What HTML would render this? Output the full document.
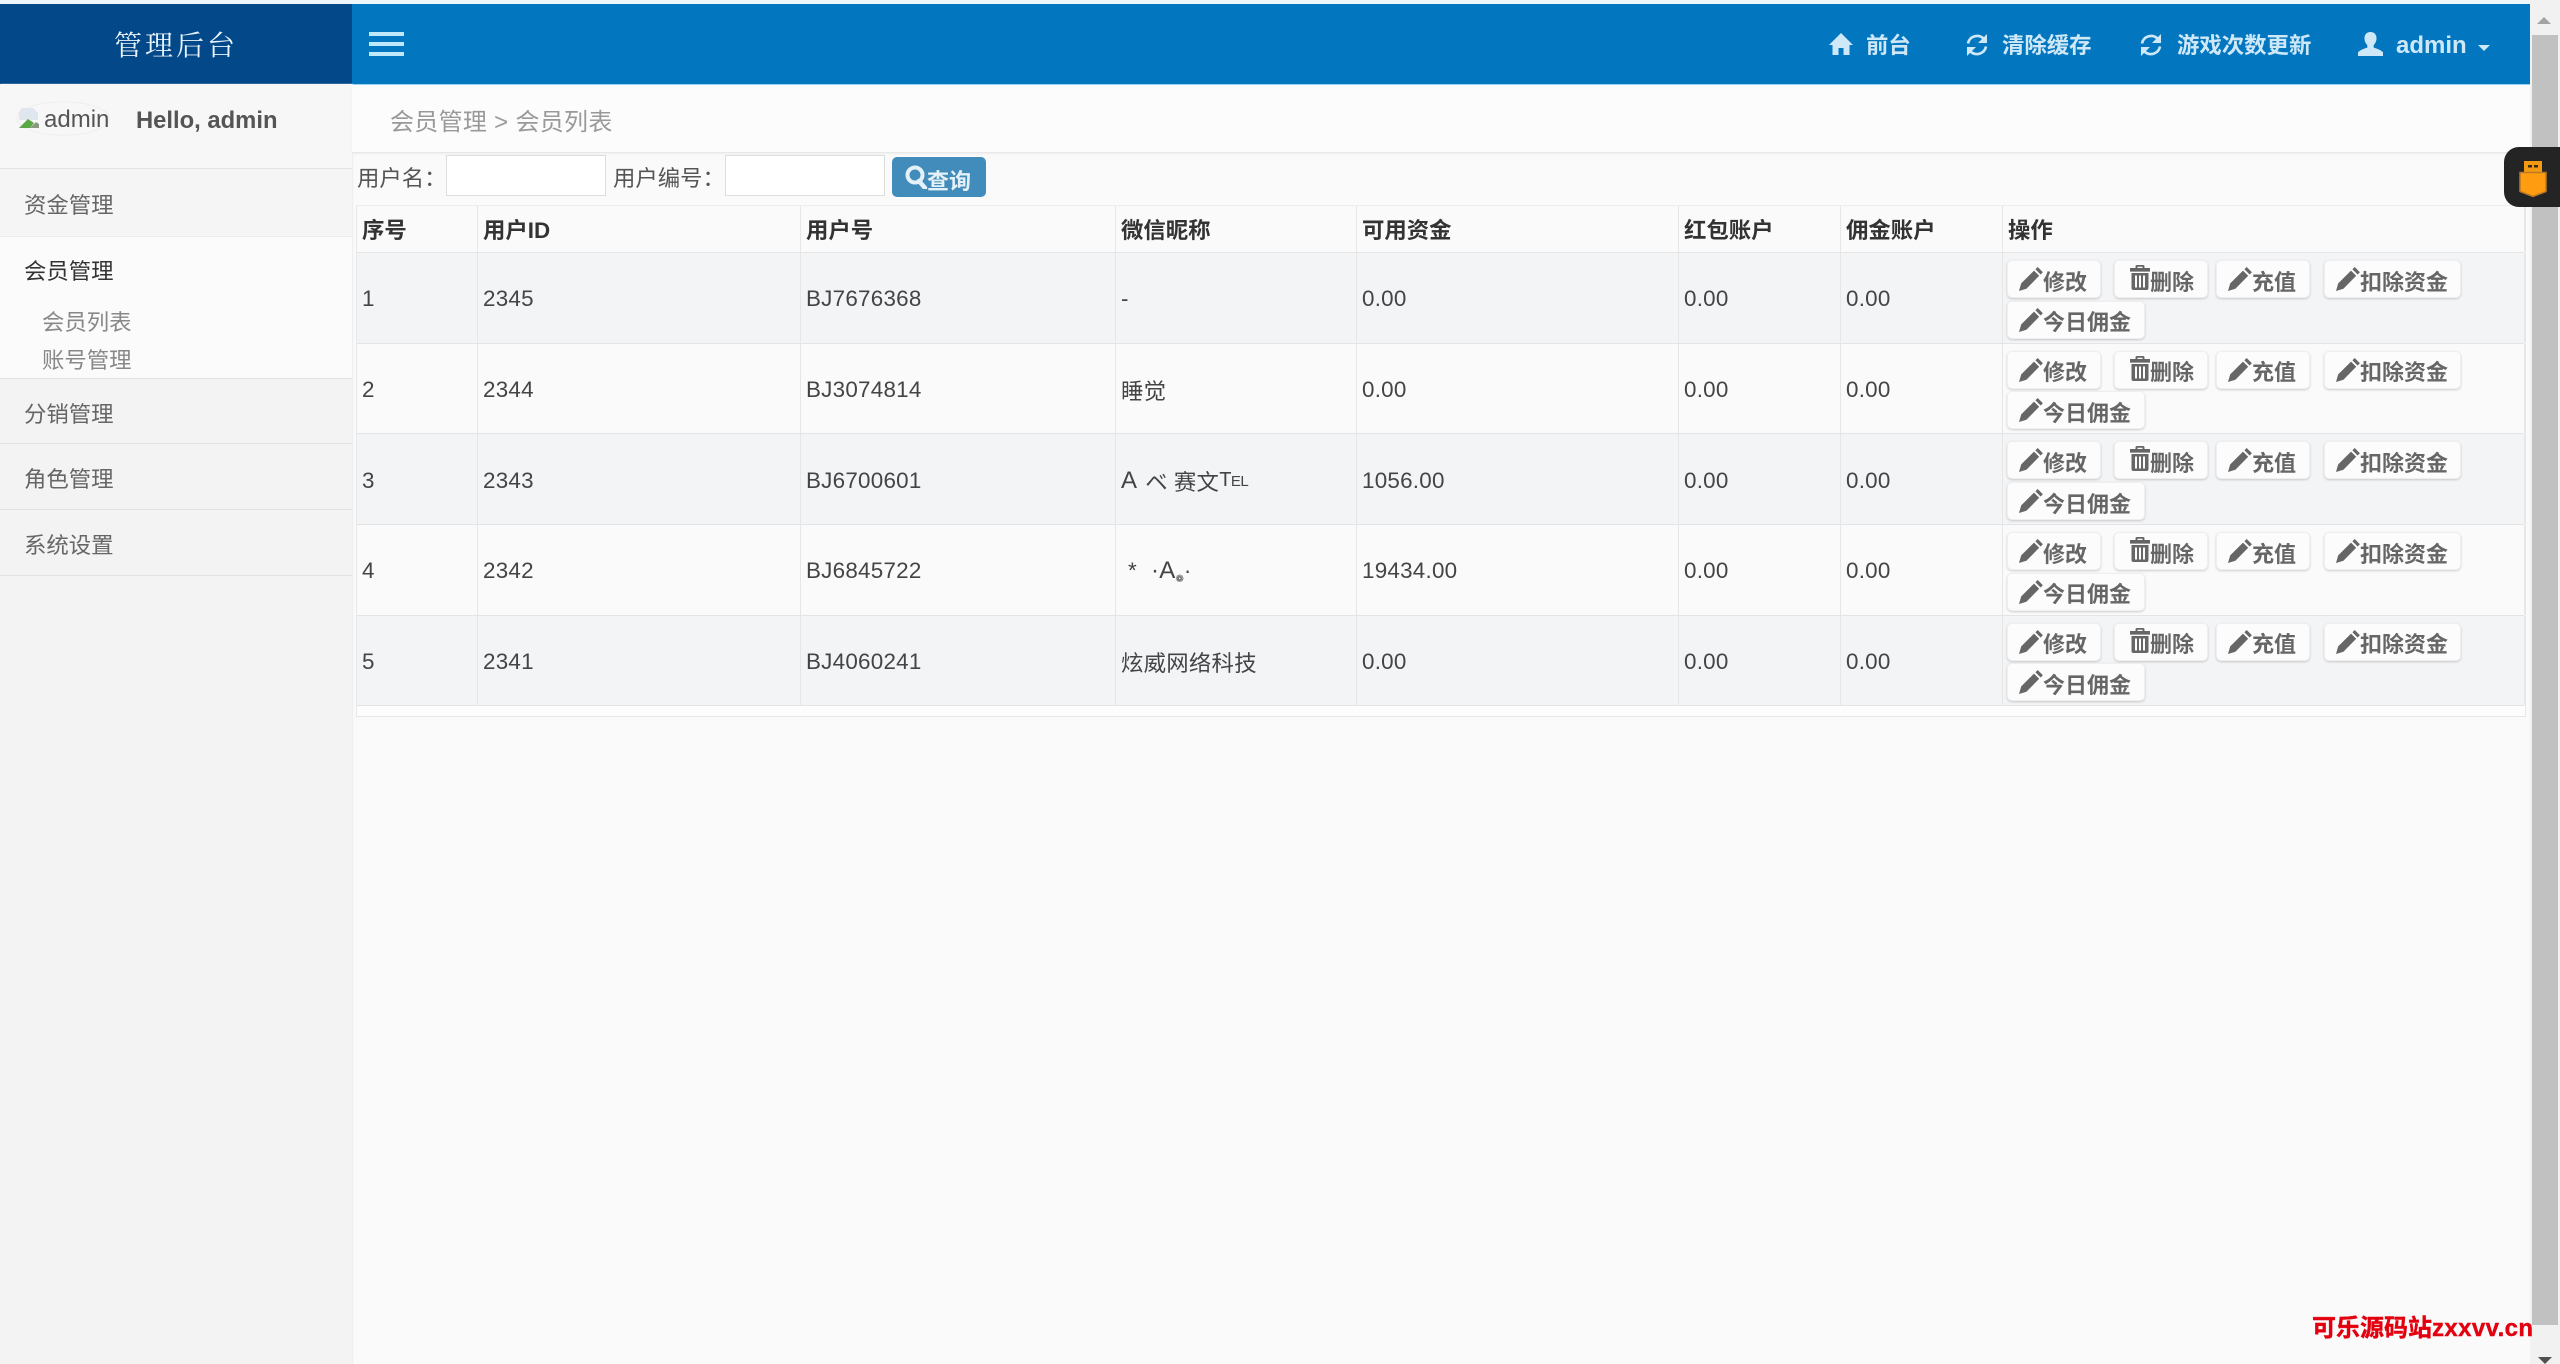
<!DOCTYPE html>
<html lang="zh-CN">
<head>
<meta charset="utf-8">
<title>管理后台</title>
<style>
html,body{margin:0;padding:0;width:2560px;height:1364px;overflow:hidden;background:#fafafa}
body{font-family:"Liberation Sans","Noto Sans CJK SC",sans-serif;font-size:22.4px;color:#444}
#wrap{position:absolute;left:0;top:0;width:2560px;height:1364px;overflow:hidden;filter:blur(.35px);background:#fafafa}
.a{position:absolute}
.t{position:absolute;line-height:40px;height:40px;white-space:nowrap}
.side{left:0;top:84px;width:352px;height:1280px;background:#f3f3f3;box-shadow:1px 0 1px #ececec}
.line{position:absolute;left:0;width:352px;height:1px;background:#e2e2e2}
.menu{left:24px;color:#666}
.sub{left:42px;color:#888}
.top{color:#cfe8f8;font-weight:bold;font-size:22.4px}
.row{position:absolute;left:356px;width:2168px;display:grid;grid-template-columns:121px 323px 315px 241px 322px 162px 162px 522px;box-sizing:border-box;border-bottom:1px solid #e3e4e6;border-left:1px solid #e8e8e8}
.row>div{border-right:1px solid #e6e6e6;padding-left:5px;padding-top:3px;display:flex;align-items:center;white-space:nowrap;letter-spacing:.25px}
.r1{height:90.67px;background:#f3f4f6}
.r2{height:90.67px;background:#fafafa}
.head{top:205px;height:48.3px;background:#fafafa;font-weight:bold;color:#333}
.head>div{letter-spacing:0;padding-top:0}
.btn{position:absolute;box-sizing:border-box;height:38px;background:#fcfcfc;border:1px solid #efefef;border-radius:5px;box-shadow:0 1px 2px rgba(0,0,0,.18);color:#666;font-weight:bold;font-size:22px;line-height:40px;white-space:nowrap}
.btn svg{position:absolute;fill:#666}
.btn span{position:absolute;top:1.5px}
.w1{width:94px}.w2{width:138px}
input{position:absolute;box-sizing:border-box;background:#fff;border:1px solid #ddd;margin:0;padding:0}
</style>
</head>
<body>
<svg width="0" height="0" style="position:absolute">
<defs>
<symbol id="pen" viewBox="0 0 24 24"><path d="M0 24l2.2-7.6L15 3.6l5.2 5.2L7.4 21.8z"/><path d="M16.4 2.3L18.7 0l5.2 5.2-2.3 2.3z"/></symbol>
<symbol id="trash" viewBox="0 0 20 25"><path d="M7 0h6a1.5 1.5 0 0 1 1.5 1.5V3H20v3.6H0V3h5.5V1.500A1.500 1.500 0 0 1 7 0zm.5 1.700V3h5V1.700z"/><path fill-rule="evenodd" d="M1.500 8h17v15a2 2 0 0 1-2 2h-13a2 2 0 0 1-2-2zM5 10.500v12h2v-12zm4 0v12h2v-12zm4 0v12h2v-12z"/></symbol>
<symbol id="home" viewBox="0 0 24 22"><path d="M12 0L24 12h-3.500v10h-6v-7h-5v7h-6V12H0z"/></symbol>
<symbol id="sync" viewBox="0 0 24 24"><path d="M3 10.500A9.300 9.300 0 0 1 18.500 5.500" fill="none" stroke="#cfe8f8" stroke-width="2.600"/><path d="M22 1v9h-9z" fill="#cfe8f8"/><path d="M21 13.500A9.300 9.300 0 0 1 5.500 18.500" fill="none" stroke="#cfe8f8" stroke-width="2.600"/><path d="M2 23v-9h9z" fill="#cfe8f8"/></symbol>
<symbol id="user" viewBox="0 0 25 24"><path d="M12.500 0c3.900 0 6 2.700 6 6.200 0 2.900-1.200 5.300-2.800 6.800v2.600c3.700 1 7.100 2.600 9.300 4.600V24H0v-3.800c2.200-2 5.600-3.600 9.300-4.600V13c-1.600-1.500-2.800-3.900-2.800-6.800C6.500 2.700 8.600 0 12.500 0z"/></symbol>
</defs>
</svg>
<div id="wrap">

<!-- top strip -->
<div class="a" style="left:0;top:0;width:2530px;height:4px;background:#eef7fc"></div>

<!-- logo + topbar -->
<div class="a" style="left:0;top:4px;width:352px;height:80px;background:#03498a"></div>
<div class="t" style="left:114px;top:24px;font-family:'Noto Serif CJK SC',serif;font-size:28px;letter-spacing:3px;color:#e9f4fb">管理后台</div>
<div class="a" style="left:352px;top:4px;width:2178px;height:80px;background:#0277c0;box-shadow:0 1px 0 #8fd0f2"></div>
<div class="a" style="left:369px;top:32px;width:35px;height:3.500px;background:#bfe8fb"></div>
<div class="a" style="left:369px;top:42px;width:35px;height:3.500px;background:#bfe8fb"></div>
<div class="a" style="left:369px;top:52px;width:35px;height:3.500px;background:#bfe8fb"></div>

<svg class="a" style="left:1829px;top:33px;fill:#cfe8f8" width="24" height="22"><use href="#home"/></svg>
<div class="t top" style="left:1866px;top:26px">前台</div>
<svg class="a" style="left:1965px;top:33px" width="24" height="24"><use href="#sync"/></svg>
<div class="t top" style="left:2002px;top:26px">清除缓存</div>
<svg class="a" style="left:2139px;top:33px" width="24" height="24"><use href="#sync"/></svg>
<div class="t top" style="left:2177px;top:26px">游戏次数更新</div>
<svg class="a" style="left:2358px;top:32px;fill:#cfe8f8" width="25" height="24"><use href="#user"/></svg>
<div class="t top" style="left:2396px;top:26px;font-size:24px">admin</div>
<div class="a" style="left:2478px;top:45px;width:0;height:0;border-left:6px solid transparent;border-right:6px solid transparent;border-top:6px solid #cfe8f8"></div>

<!-- sidebar -->
<div class="a side">
</div>
<div class="a" style="left:0;top:84px;width:352px;height:84px;background:#f7f7f7"></div>
<div class="a" style="left:17px;top:102px;width:92px;height:33px;border-radius:50%;box-shadow:0 0 1px #ccc"></div>
<svg class="a" style="left:17px;top:106px" width="26" height="24"><path d="M5 2h11l5 5v7H2V6z" fill="#dfe6ee"/><path d="M2 22l9-9 6 4-4 5z" fill="#5aa845"/><path d="M13 22l6-6 3 2v4z" fill="#8a9a80"/></svg>
<div class="t" style="left:44px;top:100px;font-size:24px;color:#555;width:65px;overflow:hidden">admin</div>
<div class="t" style="left:136px;top:100.500px;font-size:23.800px;font-weight:bold;color:#555">Hello, admin</div>

<div class="a" style="left:0;top:168px;width:352px;height:68px;background:#f5f5f5"></div>
<div class="a" style="left:0;top:236px;width:352px;height:143px;background:#fbfbfb"></div>
<div class="line" style="top:168px"></div>
<div class="line" style="top:236px;background:#ececec"></div>
<div class="line" style="top:378px"></div>
<div class="line" style="top:443px"></div>
<div class="line" style="top:509px"></div>
<div class="line" style="top:575px"></div>
<div class="t menu" style="top:185.500px">资金管理</div>
<div class="t menu" style="top:251.500px;color:#333">会员管理</div>
<div class="t sub" style="top:302.500px">会员列表</div>
<div class="t sub" style="top:340.500px">账号管理</div>
<div class="t menu" style="top:394.500px">分销管理</div>
<div class="t menu" style="top:459.500px">角色管理</div>
<div class="t menu" style="top:525.500px">系统设置</div>

<!-- breadcrumb -->
<div class="a" style="left:352px;top:85px;width:2178px;height:67px;background:#fcfcfc;border-bottom:1px solid #e8e8e8;box-shadow:0 1px 2px #eee"></div>
<div class="t" style="left:390px;top:102.500px;font-size:24px;color:#999;letter-spacing:.3px">会员管理 &gt; 会员列表</div>

<!-- search form -->
<div class="t" style="left:357px;top:158.500px;color:#555">用户名：</div>
<input class="a" style="left:446px;top:155px;width:160px;height:41px">
<div class="t" style="left:613px;top:158.500px;color:#555">用户编号：</div>
<input class="a" style="left:725px;top:155px;width:160px;height:41px">
<div class="a" style="left:892px;top:157px;width:94px;height:40px;background:#428cbb;border-radius:5px"></div>
<svg class="a" style="left:905px;top:165px" width="23" height="24"><circle cx="10" cy="10" r="7.500" fill="none" stroke="#e4f1f9" stroke-width="4"/><path d="M14 16l6 7" stroke="#e4f1f9" stroke-width="4.500" stroke-linecap="round"/></svg>
<div class="t" style="left:927px;top:161.500px;font-size:22px;font-weight:bold;color:#e4f1f9">查询</div>

<!-- table wrapper bottom -->
<div class="a" style="left:356px;top:205px;width:2168px;height:511px;background:#fdfdfd;border-bottom:1px solid #e6e6e6;border-right:1px solid #e8e8e8;border-left:1px solid #e8e8e8;box-sizing:content-box"></div>

<!-- table head -->
<div class="row head" style="border-top:1px solid #eee">
<div>序号</div><div>用户ID</div><div>用户号</div><div>微信昵称</div><div>可用资金</div><div>红包账户</div><div>佣金账户</div><div>操作</div>
</div>

<!-- rows -->
<div class="row r1" style="top:253px"><div>1</div><div>2345</div><div>BJ7676368</div><div>-</div><div>0.00</div><div>0.00</div><div>0.00</div><div></div></div>
<div class="row r2" style="top:343.670px"><div>2</div><div>2344</div><div>BJ3074814</div><div>睡觉</div><div>0.00</div><div>0.00</div><div>0.00</div><div></div></div>
<div class="row r1" style="top:434.330px"><div>3</div><div>2343</div><div>BJ6700601</div><div><span style="font-size:24px">A</span><span style="margin-left:8px">ベ</span><span style="margin-left:6px">赛文</span><span style="font-size:20px;letter-spacing:-.5px">T<span style="font-size:15px">EL</span></span></div><div>1056.00</div><div>0.00</div><div>0.00</div><div></div></div>
<div class="row r2" style="top:525px"><div><span>4</span></div><div>2342</div><div>BJ6845722</div><div><span style="margin-left:7px">*</span><span style="margin-left:14px;font-size:24px">·A</span><span style="font-size:10px;margin-top:16px;font-family:'DejaVu Sans',sans-serif;letter-spacing:0">❁</span><span>·</span></div><div>19434.00</div><div>0.00</div><div>0.00</div><div></div></div>
<div class="row r1" style="top:615.670px"><div>5</div><div>2341</div><div>BJ4060241</div><div>炫威网络科技</div><div>0.00</div><div>0.00</div><div>0.00</div><div></div></div>

<!-- row 1 buttons -->
<div class="a" style="left:0;top:253px">
<div class="btn w1" style="left:2007px;top:7px"><svg style="left:11px;top:6px" width="24" height="24"><use href="#pen"/></svg><span style="left:35px">修改</span></div>
<div class="btn w1" style="left:2114px;top:7px"><svg style="left:15px;top:4px" width="20" height="25"><use href="#trash"/></svg><span style="left:35px">删除</span></div>
<div class="btn w1" style="left:2216px;top:7px"><svg style="left:11px;top:6px" width="24" height="24"><use href="#pen"/></svg><span style="left:35px">充值</span></div>
<div class="btn w2" style="left:2324px;top:7px;width:137px"><svg style="left:11px;top:6px" width="24" height="24"><use href="#pen"/></svg><span style="left:35px">扣除资金</span></div>
<div class="btn w2" style="left:2007px;top:47.700px"><svg style="left:11px;top:6px" width="24" height="24"><use href="#pen"/></svg><span style="left:35px">今日佣金</span></div>
</div>
<!-- row 2 buttons -->
<div class="a" style="left:0;top:343.670px">
<div class="btn w1" style="left:2007px;top:7px"><svg style="left:11px;top:6px" width="24" height="24"><use href="#pen"/></svg><span style="left:35px">修改</span></div>
<div class="btn w1" style="left:2114px;top:7px"><svg style="left:15px;top:4px" width="20" height="25"><use href="#trash"/></svg><span style="left:35px">删除</span></div>
<div class="btn w1" style="left:2216px;top:7px"><svg style="left:11px;top:6px" width="24" height="24"><use href="#pen"/></svg><span style="left:35px">充值</span></div>
<div class="btn w2" style="left:2324px;top:7px;width:137px"><svg style="left:11px;top:6px" width="24" height="24"><use href="#pen"/></svg><span style="left:35px">扣除资金</span></div>
<div class="btn w2" style="left:2007px;top:47.700px"><svg style="left:11px;top:6px" width="24" height="24"><use href="#pen"/></svg><span style="left:35px">今日佣金</span></div>
</div>
<!-- row 3 buttons -->
<div class="a" style="left:0;top:434.330px">
<div class="btn w1" style="left:2007px;top:7px"><svg style="left:11px;top:6px" width="24" height="24"><use href="#pen"/></svg><span style="left:35px">修改</span></div>
<div class="btn w1" style="left:2114px;top:7px"><svg style="left:15px;top:4px" width="20" height="25"><use href="#trash"/></svg><span style="left:35px">删除</span></div>
<div class="btn w1" style="left:2216px;top:7px"><svg style="left:11px;top:6px" width="24" height="24"><use href="#pen"/></svg><span style="left:35px">充值</span></div>
<div class="btn w2" style="left:2324px;top:7px;width:137px"><svg style="left:11px;top:6px" width="24" height="24"><use href="#pen"/></svg><span style="left:35px">扣除资金</span></div>
<div class="btn w2" style="left:2007px;top:47.700px"><svg style="left:11px;top:6px" width="24" height="24"><use href="#pen"/></svg><span style="left:35px">今日佣金</span></div>
</div>
<!-- row 4 buttons -->
<div class="a" style="left:0;top:525px">
<div class="btn w1" style="left:2007px;top:7px"><svg style="left:11px;top:6px" width="24" height="24"><use href="#pen"/></svg><span style="left:35px">修改</span></div>
<div class="btn w1" style="left:2114px;top:7px"><svg style="left:15px;top:4px" width="20" height="25"><use href="#trash"/></svg><span style="left:35px">删除</span></div>
<div class="btn w1" style="left:2216px;top:7px"><svg style="left:11px;top:6px" width="24" height="24"><use href="#pen"/></svg><span style="left:35px">充值</span></div>
<div class="btn w2" style="left:2324px;top:7px;width:137px"><svg style="left:11px;top:6px" width="24" height="24"><use href="#pen"/></svg><span style="left:35px">扣除资金</span></div>
<div class="btn w2" style="left:2007px;top:47.700px"><svg style="left:11px;top:6px" width="24" height="24"><use href="#pen"/></svg><span style="left:35px">今日佣金</span></div>
</div>
<!-- row 5 buttons -->
<div class="a" style="left:0;top:615.670px">
<div class="btn w1" style="left:2007px;top:7px"><svg style="left:11px;top:6px" width="24" height="24"><use href="#pen"/></svg><span style="left:35px">修改</span></div>
<div class="btn w1" style="left:2114px;top:7px"><svg style="left:15px;top:4px" width="20" height="25"><use href="#trash"/></svg><span style="left:35px">删除</span></div>
<div class="btn w1" style="left:2216px;top:7px"><svg style="left:11px;top:6px" width="24" height="24"><use href="#pen"/></svg><span style="left:35px">充值</span></div>
<div class="btn w2" style="left:2324px;top:7px;width:137px"><svg style="left:11px;top:6px" width="24" height="24"><use href="#pen"/></svg><span style="left:35px">扣除资金</span></div>
<div class="btn w2" style="left:2007px;top:47.700px"><svg style="left:11px;top:6px" width="24" height="24"><use href="#pen"/></svg><span style="left:35px">今日佣金</span></div>
</div>

<!-- scrollbar -->
<div class="a" style="left:2530px;top:0;width:30px;height:1364px;background:#f1f1f1"></div>
<div class="a" style="left:2532px;top:35px;width:26px;height:1290px;background:#c1c1c1"></div>
<div class="a" style="left:2537px;top:17px;width:0;height:0;border-left:7.500px solid transparent;border-right:7.500px solid transparent;border-bottom:7.500px solid #a3a3a3"></div>
<div class="a" style="left:2538px;top:1357px;width:0;height:0;border-left:7px solid transparent;border-right:7px solid transparent;border-top:7px solid #505050"></div>

<!-- usb widget -->
<div class="a" style="left:2504px;top:147px;width:56px;height:60px;background:#242424;border-radius:15px 0 0 15px"></div>
<svg class="a" style="left:2518px;top:160px" width="30" height="38">
<path d="M6 1h18v11H6z" fill="#f49a12"/><path d="M10 5h4v2.500h-4zM16 5h4v2.500h-4z" fill="#3a2a10"/>
<path d="M2 12.500h26v19l-13 5-13-5z" fill="#ff9c10" stroke="#b87a26" stroke-width="1.500"/>
</svg>

<!-- watermark -->
<div class="t" style="left:2312px;top:1309px;font-size:24px;font-weight:bold;color:#e3000f;-webkit-text-stroke:.4px #e3000f">可乐源码站<span style="letter-spacing:.4px">zxxvv.cn</span></div>

</div>
</body>
</html>
